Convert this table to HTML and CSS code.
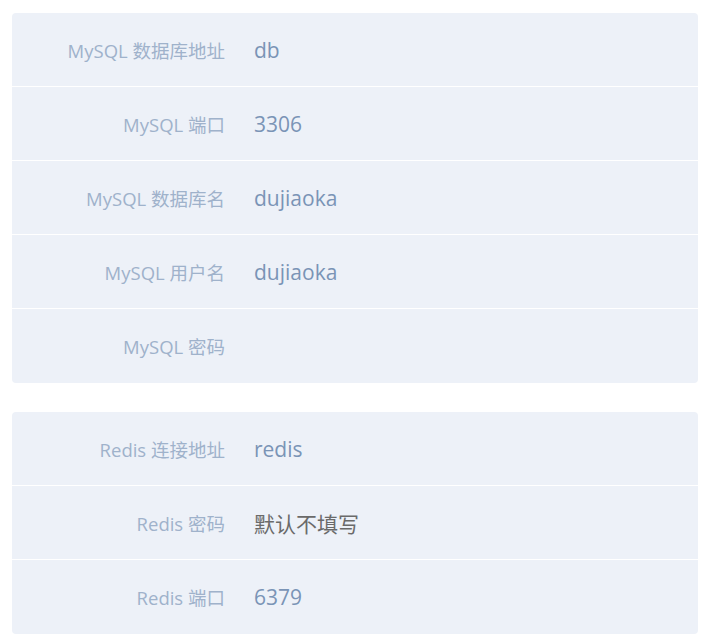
FILE: index.html
```html
<!DOCTYPE html>
<html lang="zh-CN">
<head>
  <meta charset="UTF-8">
  <title>配置</title>
  <link rel="stylesheet" href="styles.css">
</head>
<body>
  <div class="panel">
    <div class="row">
      <label>MySQL 数据库地址</label>
      <span class="value">db</span>
    </div>
    <div class="row">
      <label>MySQL 端口</label>
      <span class="value">3306</span>
    </div>
    <div class="row">
      <label>MySQL 数据库名</label>
      <span class="value">dujiaoka</span>
    </div>
    <div class="row">
      <label>MySQL 用户名</label>
      <span class="value">dujiaoka</span>
    </div>
    <div class="row">
      <label>MySQL 密码</label>
      <span class="value"></span>
    </div>
  </div>

  <div class="panel">
    <div class="row">
      <label>Redis 连接地址</label>
      <span class="value">redis</span>
    </div>
    <div class="row">
      <label>Redis 密码</label>
      <span class="value placeholder">默认不填写</span>
    </div>
    <div class="row">
      <label>Redis 端口</label>
      <span class="value">6379</span>
    </div>
  </div>
</body>
</html>
```

FILE: styles.css
```css
* {
  margin: 0;
  padding: 0;
  box-sizing: border-box;
  font-family: 'Open Sans', 'Noto Sans CJK SC', sans-serif;
}

body {
  background: #ffffff;
  padding: 13px 12px 0 12px;
  display: flex;
  flex-direction: column;
  gap: 29px;
}

.panel {
  background-color: #edf1f8;
  border-radius: 4px;
  display: flex;
  flex-direction: column;
}

.row {
  height: 74px;
  display: flex;
  align-items: center;
  gap: 29px;
  border-bottom: 1px solid #ffffff;
}

.row:last-child {
  border-bottom: none;
}

.row label {
  width: 213px;
  text-align: right;
  font-size: 18.5px;
  color: #9fb2cb;
}

.value {
  font-size: 21px;
  color: #7a94b6;
}

.value.placeholder {
  color: #6a6a6a;
}
```
